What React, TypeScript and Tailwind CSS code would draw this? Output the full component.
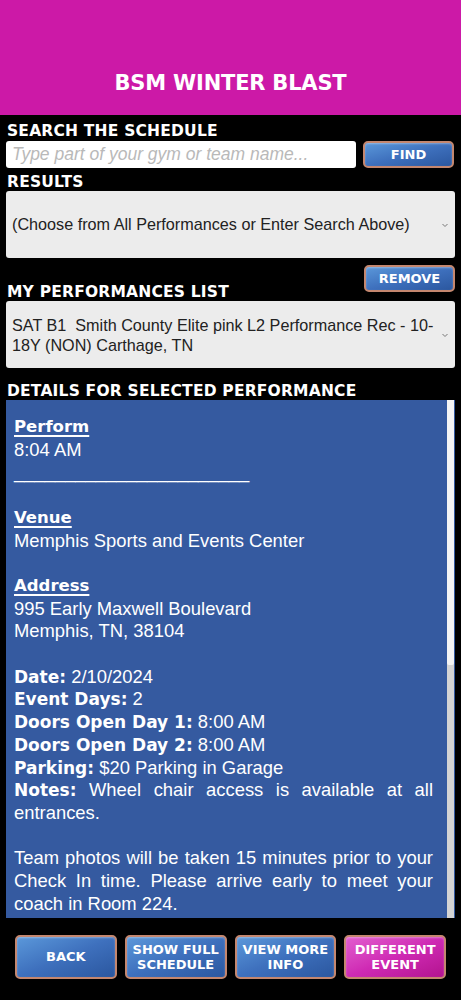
import React from "react";

const heading = "font-['DejaVu_Sans',sans-serif] font-bold uppercase text-white text-[15.5px] leading-[18px] tracking-[0.2px]";

function GlossButton({
  label,
  pink = false,
  className = "",
}: {
  label: React.ReactNode;
  pink?: boolean;
  className?: string;
}) {
  return (
    <button
      className={`flex items-center justify-center rounded-[5px] border-2 border-[#c4876f] text-center font-['DejaVu_Sans',sans-serif] font-bold uppercase text-white shadow-[inset_0_1px_2px_rgba(255,255,255,0.35)] ${
        pink
          ? "bg-gradient-to-br from-[#e25ccf] via-[#cf2ab4] to-[#b3128f]"
          : "bg-gradient-to-br from-[#5b98da] via-[#3e70bd] to-[#2b579f]"
      } ${className}`}
    >
      {label}
    </button>
  );
}

function Chevron() {
  return (
    <svg className="h-[6px] w-[8px] text-[#777]" viewBox="0 0 8 6" fill="none">
      <path d="M1.5 2l2.5 2.5L6.5 2" stroke="currentColor" strokeWidth="1" />
    </svg>
  );
}

function Label({ children }: { children: React.ReactNode }) {
  return (
    <span className="font-['DejaVu_Sans',sans-serif] text-[17px] font-bold leading-none">
      {children}
    </span>
  );
}

function Title({ children }: { children: React.ReactNode }) {
  return (
    <div className="font-['DejaVu_Sans',sans-serif] text-[16.5px] font-bold underline decoration-[1.5px] underline-offset-[3px]">
      {children}
    </div>
  );
}

export default function App() {
  return (
    <div className="flex h-[1000px] w-[461px] flex-col bg-black font-['Liberation_Sans',Arial,sans-serif]">
      {/* Header */}
      <div className="flex h-[115px] items-end justify-center bg-[#cc19a7] pb-[20px]">
        <h1 className="font-['DejaVu_Sans',sans-serif] text-[21px] font-bold uppercase leading-[24px] tracking-[-0.2px] text-white">
          BSM Winter Blast
        </h1>
      </div>

      <div className="flex flex-col px-[6px]">
        {/* Search */}
        <div className={`${heading} mt-[7px] pl-[1px]`}>Search the Schedule</div>
        <div className="mt-[1px] flex items-center gap-[7px]">
          <input
            type="text"
            placeholder="Type part of your gym or team name..."
            className="h-[27px] w-[350px] rounded-[3px] bg-white px-[6px] text-[17.5px] italic text-black outline-none placeholder:text-[#b9b9b9]"
          />
          <GlossButton label="Find" className="h-[27px] w-[91px] text-[13px]" />
        </div>

        {/* Results */}
        <div className={`${heading} mt-[5px] pl-[1px]`}>Results</div>
        <div className="flex h-[67px] items-center justify-between rounded-[3px] bg-[#ececec] pl-[6px] pr-[6px] text-[16.2px] text-[#222]">
          <span>(Choose from All Performances or Enter Search Above)</span>
          <Chevron />
        </div>

        {/* My performances */}
        <div className="mt-[7px] flex items-start justify-between">
          <div className={`${heading} mt-[18px] pl-[1px]`}>My Performances List</div>
          <GlossButton label="Remove" className="h-[27px] w-[91px] text-[13px]" />
        </div>
        <div className="flex h-[67px] items-center justify-between rounded-[3px] bg-[#ececec] pl-[6px] pr-[6px] text-[16.2px] leading-[20px] text-[#222]">
          <span className="w-[425px]">
            SAT B1&nbsp; Smith County Elite pink L2 Performance Rec - 10-18Y (NON) Carthage, TN
          </span>
          <Chevron />
        </div>

        {/* Details */}
        <div className={`${heading} mt-[14px] pl-[1px]`}>Details for Selected Performance</div>
        <div className="flex h-[518px] overflow-hidden bg-[#355aa0] text-white">
          <div className="flex-1 pl-[8px] pr-[14px] pt-[16px] text-[18.4px] leading-[22.7px]">
            <Title>Perform</Title>
            <div>8:04 AM</div>
            <div>_______________________</div>
            <div>&nbsp;</div>
            <Title>Venue</Title>
            <div>Memphis Sports and Events Center</div>
            <div>&nbsp;</div>
            <Title>Address</Title>
            <div>995 Early Maxwell Boulevard</div>
            <div>Memphis, TN, 38104</div>
            <div>&nbsp;</div>
            <div>
              <Label>Date:</Label> 2/10/2024
            </div>
            <div>
              <Label>Event Days:</Label> 2
            </div>
            <div>
              <Label>Doors Open Day 1:</Label> 8:00 AM
            </div>
            <div>
              <Label>Doors Open Day 2:</Label> 8:00 AM
            </div>
            <div>
              <Label>Parking:</Label> $20 Parking in Garage
            </div>
            <div className="text-justify">
              <Label>Notes:</Label> Wheel chair access is available at all entrances.
            </div>
            <div>&nbsp;</div>
            <div className="text-justify">
              Team photos will be taken 15 minutes prior to your Check In time. Please arrive early
              to meet your coach in Room 224.
            </div>
          </div>
          {/* scrollbar */}
          <div className="flex w-[7px] flex-col bg-[#d4d4d4]">
            <div className="h-[265px] rounded-b-[2px] bg-[#f4f4f4]" />
          </div>
          <div className="w-[1px] bg-[#355aa0]" />
        </div>

        {/* Bottom buttons */}
        <div className="mt-[17px] flex gap-[8px] px-[9px]">
          <GlossButton label="Back" className="h-[44px] w-[102px] text-[13px]" />
          <GlossButton
            label={<span className="leading-[15px]">Show Full<br />Schedule</span>}
            className="h-[44px] w-[102px] text-[13px]"
          />
          <GlossButton
            label={<span className="leading-[15px]">View More<br />Info</span>}
            className="h-[44px] w-[102px] text-[13px]"
          />
          <GlossButton
            pink
            label={<span className="leading-[15px]">Different<br />Event</span>}
            className="h-[44px] w-[102px] text-[13px]"
          />
        </div>
      </div>
    </div>
  );
}
